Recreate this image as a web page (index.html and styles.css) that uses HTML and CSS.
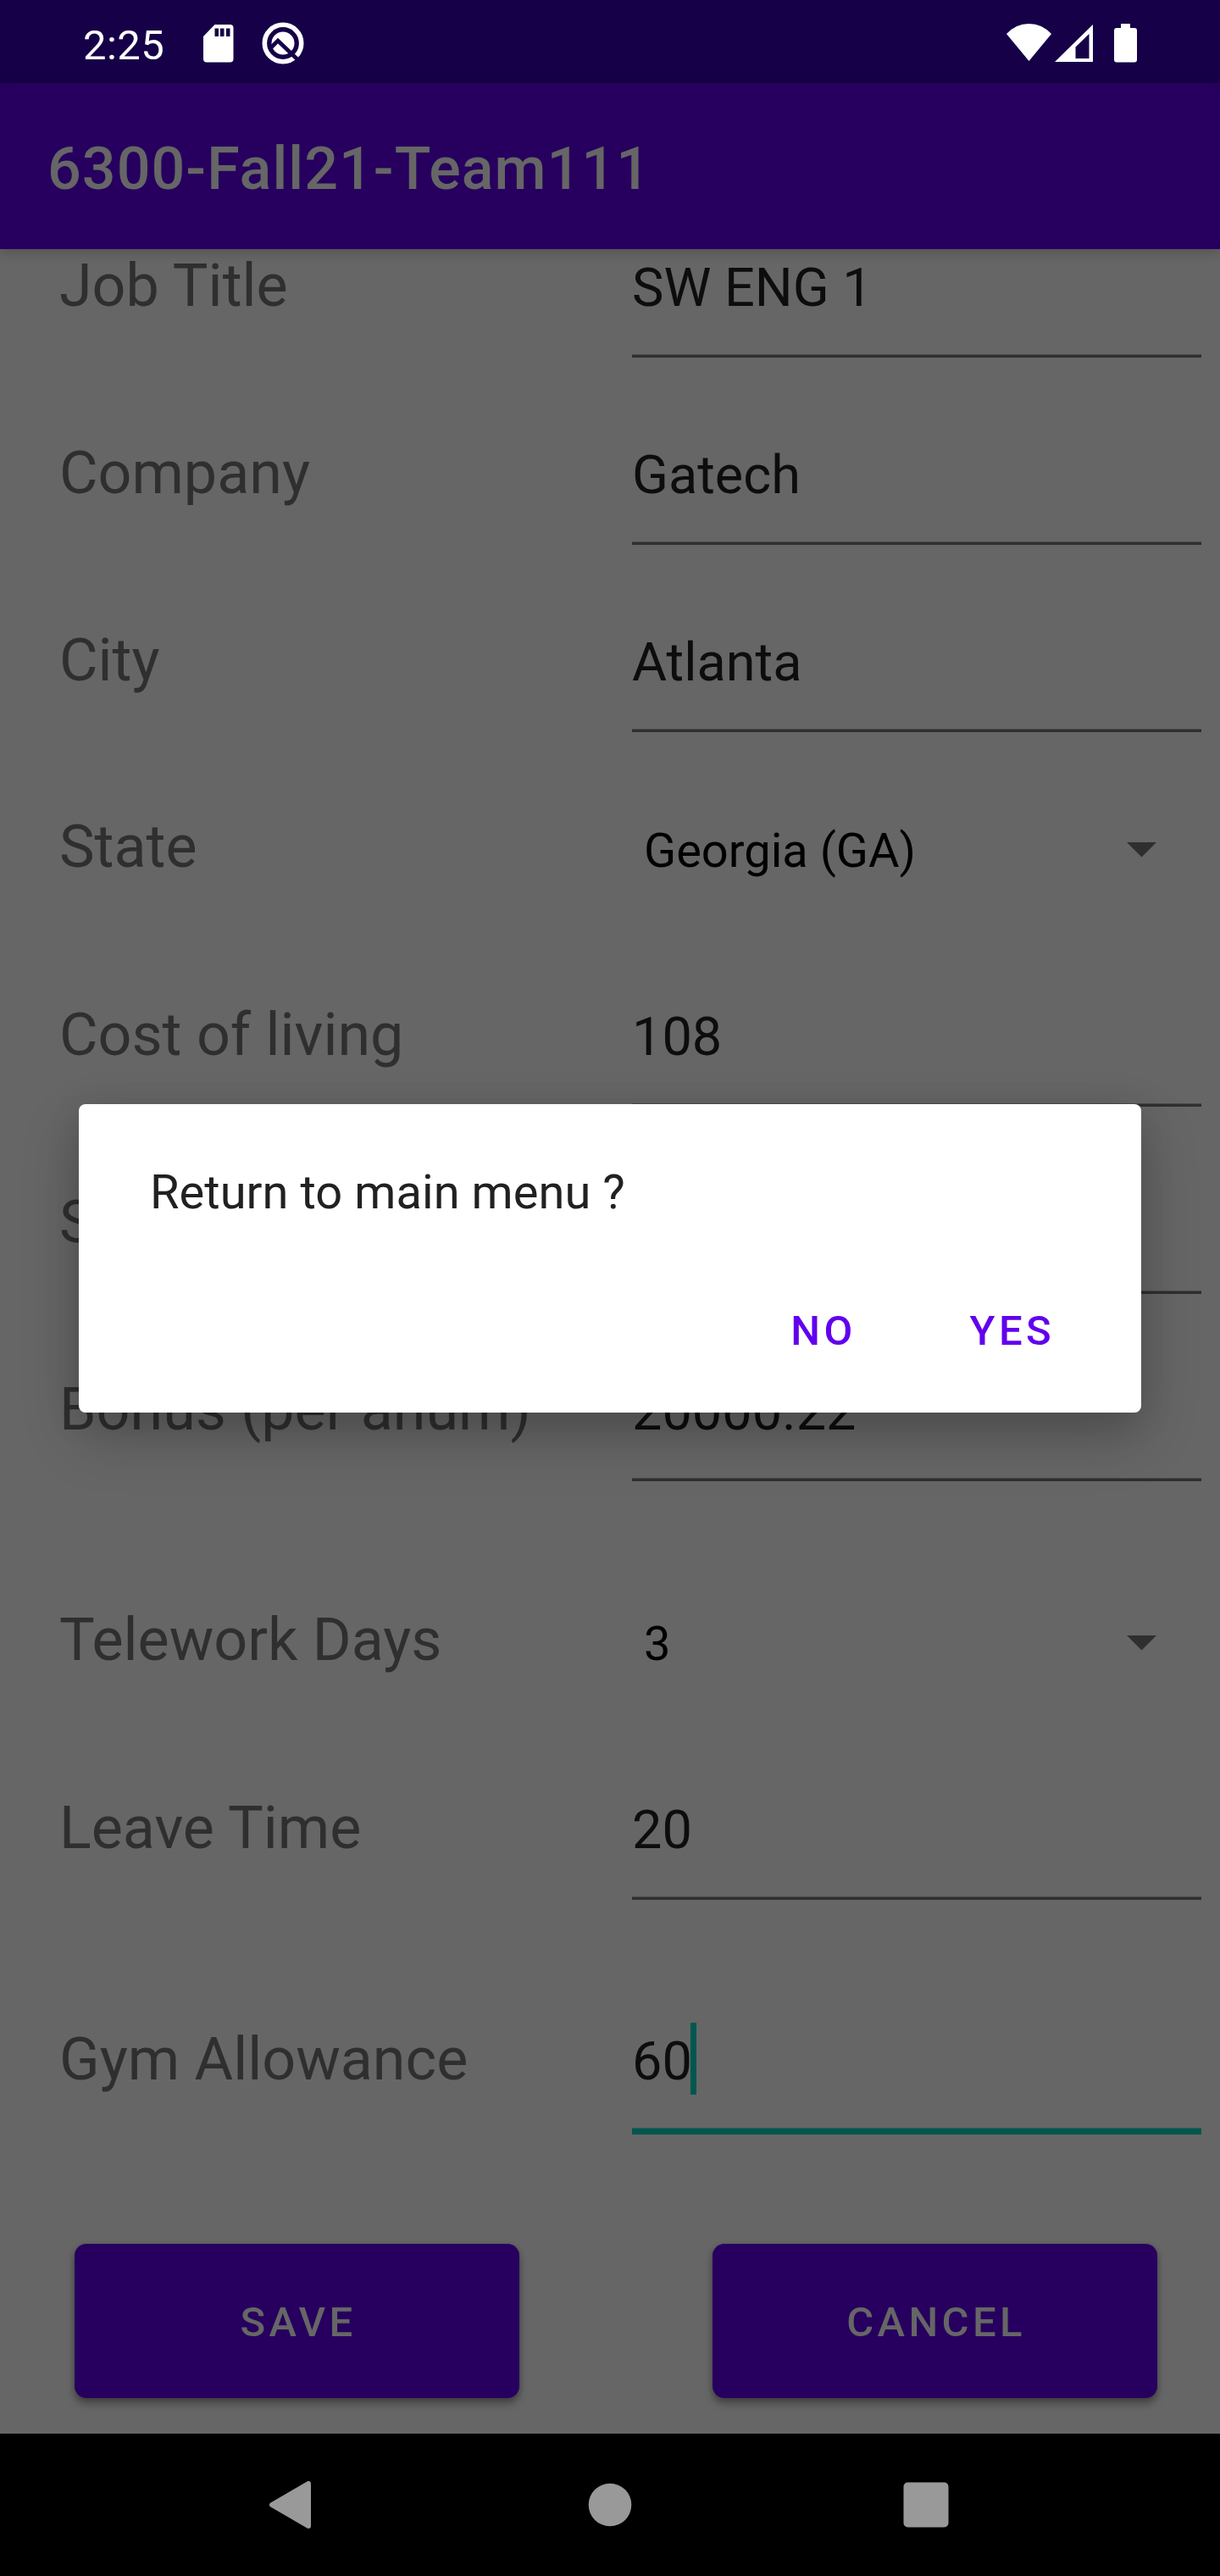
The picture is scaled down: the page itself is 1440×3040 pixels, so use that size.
FILE: index.html
```html
<!DOCTYPE html>
<html lang="en">
<head>
<meta charset="utf-8">
<title>6300-Fall21-Team111</title>
<link rel="stylesheet" href="styles.css">
</head>
<body>
<div class="screen">
  <header class="status-bar">
    <span class="clock">2:25</span>
    <svg class="icon-sd" viewBox="0 0 36 45" width="36" height="45"><path fill="#fff" fill-rule="evenodd" d="M13.500 0H31.500a4 4 0 0 1 4 4V40.500a4 4 0 0 1-4 4H4a4 4 0 0 1-4-4V14zM13.500 4.500v9.500h4.500v-9.500zM20 4.500v9.500h4.500v-9.500zM27 4.500v9.500h4.500v-9.500z"/></svg>
    <svg class="icon-debug" viewBox="0 0 50 50" width="50" height="50"><circle cx="25" cy="25" r="21.700" fill="none" stroke="#fff" stroke-width="5.600"/><circle cx="25" cy="25" r="13.500" fill="#fff"/><path d="M10 31L19 22L42 44" fill="none" stroke="#160048" stroke-width="4.800"/></svg>
    <span class="spacer"></span>
    <svg class="icon-wifi" viewBox="0 0 53 44" width="53" height="44"><path fill="#fff" d="M0 12Q11 0 26.500 0T53 12L26.500 44z"/></svg>
    <svg class="icon-signal" viewBox="0 0 45 44" width="45" height="44"><path fill="#fff" fill-rule="evenodd" d="M45 0V44H0zM40.500 11L24.500 26.500V40H40.500z"/></svg>
    <svg class="icon-battery" viewBox="0 0 27 46" width="27" height="46"><path fill="#fff" d="M8 0H19V5H24a3 3 0 0 1 3 3V42.500a3 3 0 0 1-3 3H3a3 3 0 0 1-3-3V8a3 3 0 0 1 3-3H8z"/></svg>
  </header>
  <div class="app-bar"><h1 class="app-title">6300-Fall21-Team111</h1></div>
  <main class="form">
    <div class="row"><label class="label">Job Title</label><div class="input">SW ENG 1</div></div>
    <div class="row"><label class="label">Company</label><div class="input">Gatech</div></div>
    <div class="row row-city"><label class="label">City</label><div class="input">Atlanta</div></div>
    <div class="row row-state"><label class="label">State</label><div class="spinner">Georgia (GA)<svg class="caret" viewBox="0 0 35 18" width="35" height="18"><path d="M0 0H35L17.500 17.500z"/></svg></div></div>
    <div class="row"><label class="label">Cost of living</label><div class="input">108</div></div>
    <div class="row"><label class="label">S</label><div class="input"></div></div>
    <div class="row"><label class="label">Bonus (per anum)</label><div class="input">20000.22</div></div>
    <div class="row row-telework"><label class="label">Telework Days</label><div class="spinner">3<svg class="caret" viewBox="0 0 35 18" width="35" height="18"><path d="M0 0H35L17.500 17.500z"/></svg></div></div>
    <div class="row row-leave"><label class="label">Leave Time</label><div class="input">20</div></div>
    <div class="row row-gym"><label class="label">Gym Allowance</label><div class="input focused">60<span class="cursor"></span></div></div>
    <div class="buttons"><button class="button">SAVE</button><button class="button">CANCEL</button></div>
  </main>
  <nav class="nav-bar">
    <svg viewBox="0 0 50 56" width="50" height="56"><path d="M46 3V53L3 28z" fill="#999" stroke="#999" stroke-width="6" stroke-linejoin="round"/></svg>
    <svg class="nav-home" viewBox="0 0 52 52" width="52" height="52"><circle cx="26" cy="26" r="25.300" fill="#999"/></svg>
    <svg viewBox="0 0 54 54" width="54" height="54"><rect x=".5" y=".5" width="53" height="53" rx="5" fill="#999"/></svg>
  </nav>
  <div class="overlay">
    <div class="dialog" role="dialog">
      <p class="message">Return to main menu ?</p>
      <div class="actions"><button class="action">NO</button><button class="action">YES</button></div>
    </div>
  </div>
</div>
</body>
</html>
```
FILE: styles.css
```css
* { box-sizing: border-box; }
body { margin: 0; font-family: Roboto, sans-serif; background: #666; }
svg { display: block; flex: none; }
button { border: 0; margin: 0; padding: 0; font-family: inherit; }
.screen { position: relative; width: 1440px; height: 3040px; display: flex; flex-direction: column; overflow: hidden; }

.status-bar { height: 98px; flex: none; background: #160048; color: #fff; display: flex; align-items: flex-start; padding: 0 98px; }
.clock { font-size: 49px; line-height: 58px; margin-top: 25px; width: 142px; letter-spacing: .4px; }
.icon-sd { margin-top: 29px; }
.icon-debug { margin: 26px 0 0 33px; }
.spacer { flex: 1; }
.icon-wifi { margin-top: 28px; }
.icon-signal { margin: 28.500px 25px 0 4.500px; }
.icon-battery { margin-top: 28px; }

.app-bar { height: 196px; flex: none; background: #27005f; padding: 0 56px; display: flex; align-items: center; z-index: 1; box-shadow: 0 3px 14px rgba(0, 0, 0, .22); }
.app-title { margin: 6px 0 0; font-size: 70px; line-height: 82px; font-weight: 500; letter-spacing: 1.050px; color: #666; }

.form { flex: 1; }
.row { height: 221px; display: grid; grid-template-columns: 676px 672px; padding-left: 70px; }
.row-city { height: 220px; }
.row-state { height: 222px; }
.row-telework { margin-top: 51px; }
.row-leave { margin-top: 1px; }
.row-gym { margin-top: 52px; }
.label { font-size: 70px; line-height: 82px; padding-top: 2px; color: #2f2f2f; white-space: nowrap; }
.input { height: 128px; font-size: 63px; line-height: 82px; padding-top: 5px; color: #0d0d0d; border-bottom: 3px solid #2f2f2f; background: linear-gradient(#4a4a4a, #4a4a4a) bottom / 100% 1px no-repeat; }
.focused { position: relative; height: 132px; border-bottom: 7px solid #01574f; background-image: linear-gradient(#335e5a, #335e5a); }
.cursor { position: absolute; left: 69px; top: 0; width: 7px; height: 85px; background: #01574f; }
.spinner { height: 128px; font-size: 56px; line-height: 82px; padding: 7px 53px 0 14px; color: #000; display: flex; justify-content: space-between; }
.caret { margin-top: 31px; fill: #2f2f2f; }

.buttons { display: flex; justify-content: space-between; padding: 40px 74px 0 88px; }
.button { width: 525px; height: 182px; padding: 3px 0 0 3px; border-radius: 14px; background: #27005f; color: #666; font-size: 49px; font-weight: 500; letter-spacing: 4.375px; box-shadow: 0 7px 10px rgba(0, 0, 0, .3), 0 1px 6px rgba(0, 0, 0, .18); }

.nav-bar { height: 168px; flex: none; background: #000; display: flex; align-items: center; justify-content: space-between; padding: 0 320px 0 318px; z-index: 1; }
.nav-home { margin-left: 6px; }

.overlay { position: absolute; inset: 98px 0 168px; display: flex; align-items: center; justify-content: center; z-index: 2; }
.dialog { width: 1254px; height: 364px; border-radius: 8px; background: #fff; box-shadow: 0 28px 70px rgba(0, 0, 0, .2), 0 10px 40px rgba(0, 0, 0, .12); padding: 71px 84px 0; }
.message { margin: 0; font-size: 56px; line-height: 66px; letter-spacing: .050px; color: #212121; }
.actions { display: flex; justify-content: flex-end; gap: 134px; margin-top: 102px; padding-right: 18px; }
.action { background: none; color: #6200ee; font-size: 49px; line-height: 58px; font-weight: 500; letter-spacing: 4.375px; }
```
